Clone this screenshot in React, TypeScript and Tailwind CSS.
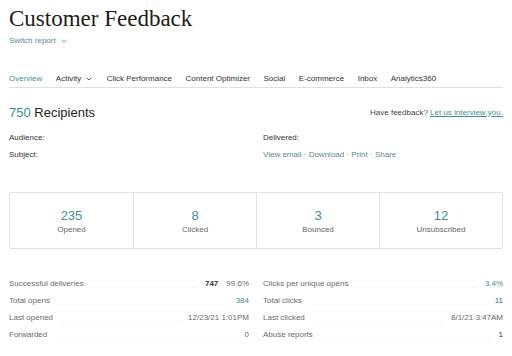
import { ChevronDown } from "lucide-react"

const sans = { fontFamily: "'Liberation Sans', Arial, sans-serif" }

const tabs = [
  { label: "Overview", active: true },
  { label: "Activity", caret: true },
  { label: "Click Performance" },
  { label: "Content Optimizer" },
  { label: "Social" },
  { label: "E-commerce" },
  { label: "Inbox" },
  { label: "Analytics360" },
]

const stats = [
  { value: "235", label: "Opened" },
  { value: "8", label: "Clicked" },
  { value: "3", label: "Bounced" },
  { value: "12", label: "Unsubscribed" },
]

function Row({ label, children }: { label: string; children: React.ReactNode }) {
  return (
    <div className="flex items-end h-[17px] text-[8px] text-[#6b6b6b]">
      <span className="whitespace-nowrap">{label}</span>
      <span className="flex-1 mx-2 mb-[2px] border-b border-dotted border-[#efefef]" />
      <span className="whitespace-nowrap">{children}</span>
    </div>
  )
}

export default function App() {
  return (
    <div className="w-[512px] h-[356px] bg-white overflow-hidden px-[9px] text-[#241c15]" style={sans}>
      <h1 className="pt-[5px] text-[23px] leading-[28px] text-[#241c15]" style={{ fontFamily: "'Liberation Serif', 'Times New Roman', serif" }}>
        Customer Feedback
      </h1>
      <div className="mt-[2px] flex items-center gap-1 text-[8px] text-[#5b8a90]">
        Switch report <ChevronDown size={8} strokeWidth={2.5} />
      </div>

      <div className="mt-[24px] flex items-center h-[17px] border-b border-[#e0e0e0] text-[8px] text-[#333]">
        {tabs.map((t) => (
          <div key={t.label} className={`flex items-center gap-1 mr-[13.5px] ${t.active ? "text-[#3f8f96]" : ""}`}>
            {t.label}
            {t.caret && <ChevronDown size={8} strokeWidth={2.5} />}
          </div>
        ))}
      </div>

      <div className="mt-[15px] flex items-center justify-between">
        <div className="text-[13px]">
          <span className="text-[#3f8f96]">750</span> Recipients
        </div>
        <div className="text-[8px] text-[#444]">
          Have feedback? <span className="text-[#3f8f96] underline">Let us interview you.</span>
        </div>
      </div>

      <div className="mt-[9px] grid grid-cols-2 gap-x-[14px] text-[8px]">
        <div className="h-[17px] text-[#333]">Audience:</div>
        <div className="h-[17px] text-[#333]">Delivered:</div>
        <div className="h-[17px] text-[#333]">Subject:</div>
        <div className="h-[17px] text-[#5b8a90]">View email · Download · Print · Share</div>
      </div>

      <div className="mt-[26px] grid grid-cols-4 h-[57px] border border-[#e3e3e3] rounded-[2px]">
        {stats.map((s, i) => (
          <div key={s.label} className={`flex flex-col items-center justify-center pt-[3px] ${i > 0 ? "border-l border-[#e3e3e3]" : ""}`}>
            <div className="text-[13px] leading-[15px] text-[#3f8f96]">{s.value}</div>
            <div className="text-[8px] text-[#666] mt-[1px]">{s.label}</div>
          </div>
        ))}
      </div>

      <div className="mt-[24px] grid grid-cols-2 gap-x-[14px]">
        <div>
          <Row label="Successful deliveries">
            <span className="font-bold text-[#333]">747</span>
            <span className="ml-2">99.6%</span>
          </Row>
          <Row label="Total opens"><span className="text-[#3f8f96]">384</span></Row>
          <Row label="Last opened">12/23/21 1:01PM</Row>
          <Row label="Forwarded">0</Row>
        </div>
        <div>
          <Row label="Clicks per unique opens"><span className="text-[#3f8f96]">3.4%</span></Row>
          <Row label="Total clicks"><span className="text-[#2f6f76]">11</span></Row>
          <Row label="Last clicked">8/1/21 3:47AM</Row>
          <Row label="Abuse reports"><span className="text-[#333]">1</span></Row>
        </div>
      </div>
    </div>
  )
}
